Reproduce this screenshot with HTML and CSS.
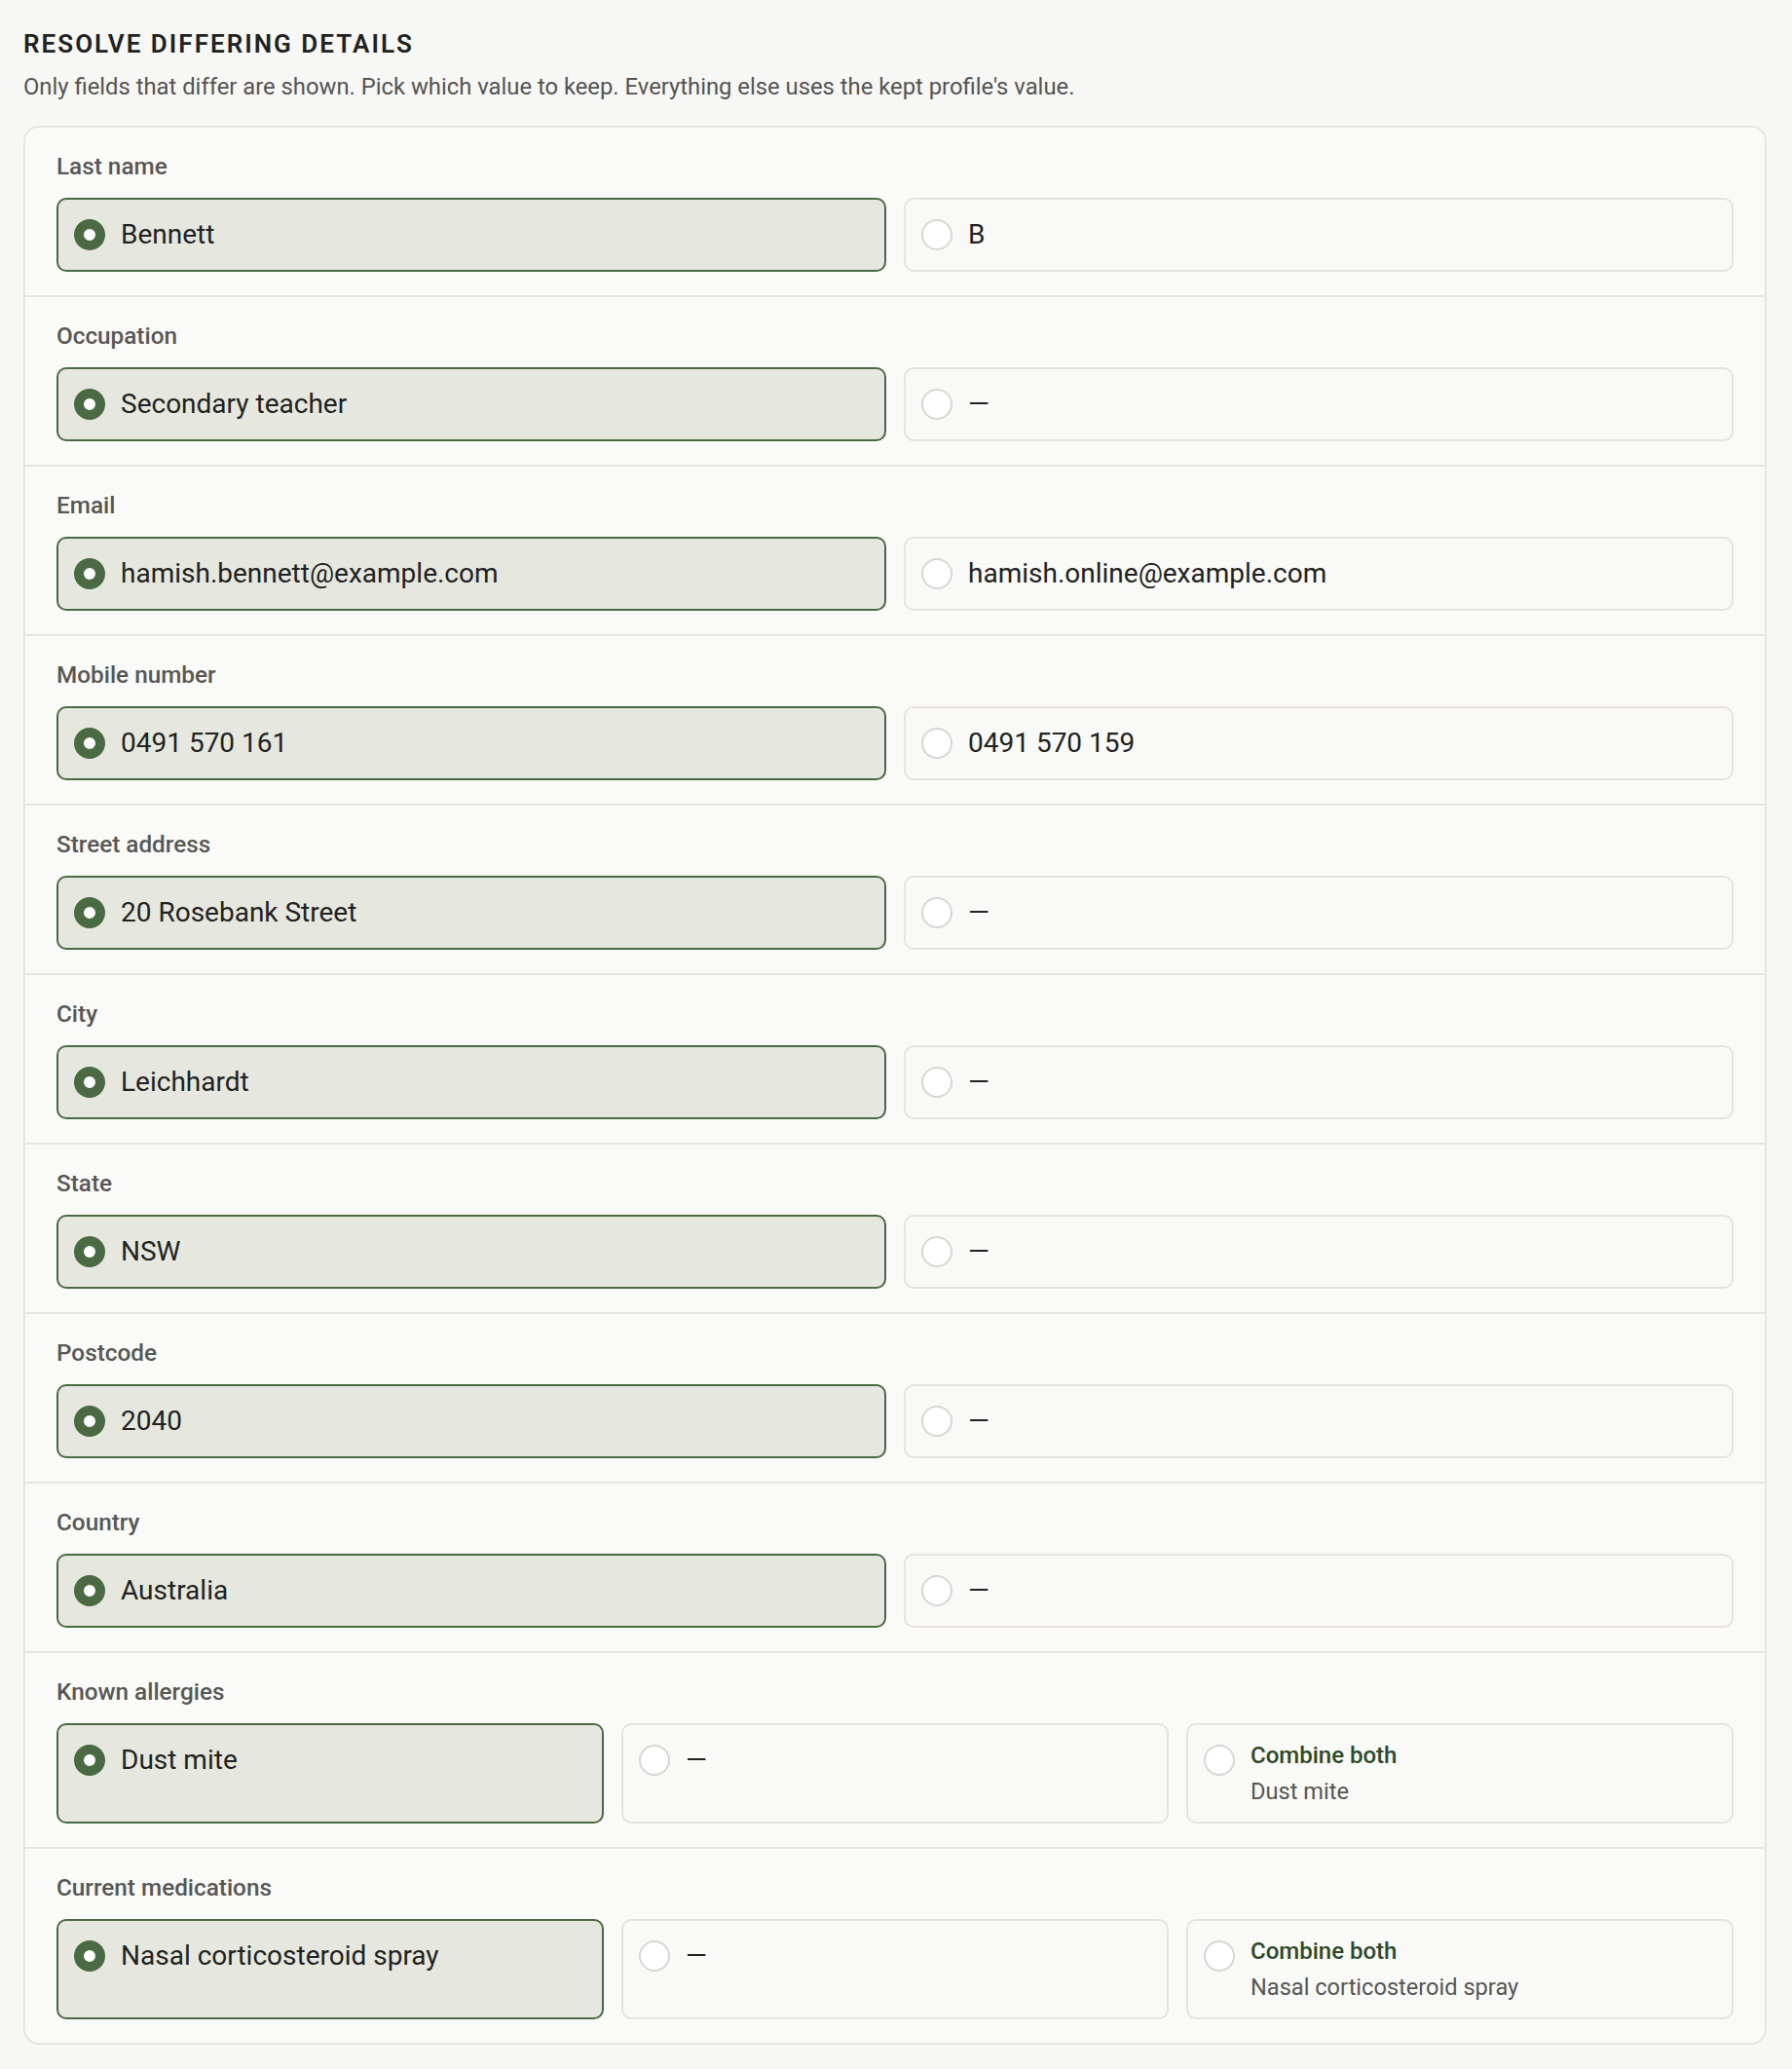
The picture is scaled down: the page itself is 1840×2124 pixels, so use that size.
FILE: index.html
```html
<!DOCTYPE html>
<html lang="en">
<head>
<meta charset="utf-8">
<title>Resolve differing details</title>
<link rel="stylesheet" href="styles.css">
</head>
<body>
<main class="page">
  <h1 class="title">Resolve differing details</h1>
  <p class="subtitle">Only fields that differ are shown. Pick which value to keep. Everything else uses the kept profile's value.</p>
  <section class="card">
    <div class="row">
      <div class="label">Last name</div>
      <div class="options two">
        <div class="option selected"><span class="radio"></span><span class="value">Bennett</span></div>
        <div class="option"><span class="radio"></span><span class="value">B</span></div>
      </div>
    </div>
    <div class="row">
      <div class="label">Occupation</div>
      <div class="options two">
        <div class="option selected"><span class="radio"></span><span class="value">Secondary teacher</span></div>
        <div class="option"><span class="radio"></span><span class="value">—</span></div>
      </div>
    </div>
    <div class="row">
      <div class="label">Email</div>
      <div class="options two">
        <div class="option selected"><span class="radio"></span><span class="value">hamish.bennett@example.com</span></div>
        <div class="option"><span class="radio"></span><span class="value">hamish.online@example.com</span></div>
      </div>
    </div>
    <div class="row">
      <div class="label">Mobile number</div>
      <div class="options two">
        <div class="option selected"><span class="radio"></span><span class="value">0491 570 161</span></div>
        <div class="option"><span class="radio"></span><span class="value">0491 570 159</span></div>
      </div>
    </div>
    <div class="row">
      <div class="label">Street address</div>
      <div class="options two">
        <div class="option selected"><span class="radio"></span><span class="value">20 Rosebank Street</span></div>
        <div class="option"><span class="radio"></span><span class="value">—</span></div>
      </div>
    </div>
    <div class="row">
      <div class="label">City</div>
      <div class="options two">
        <div class="option selected"><span class="radio"></span><span class="value">Leichhardt</span></div>
        <div class="option"><span class="radio"></span><span class="value">—</span></div>
      </div>
    </div>
    <div class="row">
      <div class="label">State</div>
      <div class="options two">
        <div class="option selected"><span class="radio"></span><span class="value">NSW</span></div>
        <div class="option"><span class="radio"></span><span class="value">—</span></div>
      </div>
    </div>
    <div class="row">
      <div class="label">Postcode</div>
      <div class="options two">
        <div class="option selected"><span class="radio"></span><span class="value">2040</span></div>
        <div class="option"><span class="radio"></span><span class="value">—</span></div>
      </div>
    </div>
    <div class="row">
      <div class="label">Country</div>
      <div class="options two">
        <div class="option selected"><span class="radio"></span><span class="value">Australia</span></div>
        <div class="option"><span class="radio"></span><span class="value">—</span></div>
      </div>
    </div>
    <div class="row">
      <div class="label">Known allergies</div>
      <div class="options three">
        <div class="option selected"><span class="radio"></span><span class="value">Dust mite</span></div>
        <div class="option"><span class="radio"></span><span class="value">—</span></div>
        <div class="option"><span class="radio"></span><span class="combine"><span class="combine-title">Combine both</span><span class="combine-sub">Dust mite</span></span></div>
      </div>
    </div>
    <div class="row">
      <div class="label">Current medications</div>
      <div class="options three">
        <div class="option selected"><span class="radio"></span><span class="value">Nasal corticosteroid spray</span></div>
        <div class="option"><span class="radio"></span><span class="value">—</span></div>
        <div class="option"><span class="radio"></span><span class="combine"><span class="combine-title">Combine both</span><span class="combine-sub">Nasal corticosteroid spray</span></span></div>
      </div>
    </div>
  </section>
</main>
</body>
</html>
```
FILE: styles.css
```css
* { box-sizing: border-box; }

html, body {
  margin: 0;
  background: #f7f7f5;
}

body {
  font-family: Roboto, "Liberation Sans", Arial, sans-serif;
  color: #222220;
}

.page {
  padding: 24px 26px 27px 24px;
}

.title {
  margin: 0;
  font-size: 26px;
  line-height: 42px;
  font-weight: 600;
  letter-spacing: 0.078em;
  text-transform: uppercase;
  color: #222220;
}

.subtitle {
  margin: 7px 0 0;
  font-size: 23.8px;
  line-height: 32px;
  color: #555452;
}

.card {
  margin-top: 24px;
  background: #fafaf8;
  border: 2px solid #e6e5e3;
  border-radius: 16px;
}

.row {
  padding: 24px 32px 24px;
}

.row + .row {
  border-top: 2px solid #e6e5e3;
}

.label {
  font-size: 24.3px;
  line-height: 32px;
  font-weight: 500;
  color: #585755;
  margin-bottom: 16px;
}

.options {
  display: grid;
  gap: 18px;
}

.options.two { grid-template-columns: 1fr 1fr; }
.options.three { grid-template-columns: 1fr 1fr 1fr; }

.option {
  display: flex;
  align-items: flex-start;
  gap: 16px;
  padding: 20px 16px;
  border: 2px solid #e4e3e1;
  border-radius: 10px;
  background: #f9f9f7;
  min-width: 0;
}

.option.selected {
  border-color: #4b6a43;
  background: #e6e8e0;
}

.radio {
  flex: none;
  width: 32px;
  height: 32px;
  border-radius: 50%;
  background: #ffffff;
  border: 2px solid #d8d6d4;
}

.option.selected .radio {
  border: 10px solid #4b6a43;
}

.value {
  font-size: 28px;
  line-height: 32px;
  color: #222220;
  white-space: nowrap;
}

.combine {
  display: flex;
  flex-direction: column;
  gap: 15px;
}

.combine-title {
  font-size: 24px;
  line-height: 22px;
  font-weight: 500;
  color: #2e4a2b;
}

.combine-sub {
  font-size: 23.6px;
  line-height: 22px;
  color: #575654;
}
```
